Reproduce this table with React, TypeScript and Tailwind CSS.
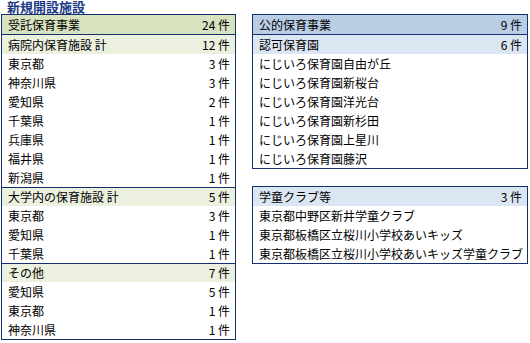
import React from "react";

const font = {
  fontFamily: '"Noto Sans CJK JP", "Noto Sans", sans-serif',
};

function Row({
  label,
  count,
  bg = "",
  h = "h-[19px]",
  line = "",
}: {
  label: string;
  count?: string;
  bg?: string;
  h?: string;
  line?: string;
}) {
  return (
    <div
      className={`flex items-center justify-between pl-[6px] pr-[5px] text-[12px] leading-none text-black ${h} ${bg} ${line}`}
    >
      <span className="whitespace-nowrap">{label}</span>
      {count !== undefined && (
        <span className="whitespace-nowrap">{count} 件</span>
      )}
    </div>
  );
}

export default function App() {
  const groupA = ["東京都", "神奈川県", "愛知県", "千葉県", "兵庫県", "福井県", "新潟県"];
  const groupACounts = ["3", "3", "2", "1", "1", "1", "1"];
  const groupB = ["東京都", "愛知県", "千葉県"];
  const groupBCounts = ["3", "1", "1"];
  const groupC = ["愛知県", "東京都", "神奈川県"];
  const groupCCounts = ["5", "1", "1"];
  const nursery = [
    "にじいろ保育園自由が丘",
    "にじいろ保育園新桜台",
    "にじいろ保育園洋光台",
    "にじいろ保育園新杉田",
    "にじいろ保育園上星川",
    "にじいろ保育園藤沢",
  ];
  const clubs = [
    "東京都中野区新井学童クラブ",
    "東京都板橋区立桜川小学校あいキッズ",
    "東京都板橋区立桜川小学校あいキッズ学童クラブ",
  ];
  return (
    <div className="w-[530px] h-[343px] overflow-hidden bg-white" style={font}>
      <div className="h-[14px] pl-[7px] text-[13px] font-bold leading-[14px] text-[#1b3a86]">
        新規開設施設
      </div>
      <div className="flex items-start">
        <div className="ml-[1px] w-[235px] border border-[#14306e]">
          <Row
            label="受託保育事業"
            count="24"
            bg="bg-[#d7e2bf]"
            h="h-[20px]"
            line="border-b border-[#14306e]"
          />
          <Row label="病院内保育施設 計" count="12" bg="bg-[#ebf0df]" />
          {groupA.map((l, i) => (
            <Row key={"a" + i} label={l} count={groupACounts[i]} />
          ))}
          <Row
            label="大学内の保育施設 計"
            count="5"
            bg="bg-[#ebf0df]"
            line="border-t border-[#14306e]"
          />
          {groupB.map((l, i) => (
            <Row key={"b" + i} label={l} count={groupBCounts[i]} />
          ))}
          <Row
            label="その他"
            count="7"
            bg="bg-[#ebf0df]"
            line="border-t border-[#14306e]"
          />
          {groupC.map((l, i) => (
            <Row key={"c" + i} label={l} count={groupCCounts[i]} />
          ))}
        </div>
        <div className="ml-[16px] flex w-[276px] flex-col gap-[17px]">
          <div className="border border-[#14306e]">
            <Row
              label="公的保育事業"
              count="9"
              bg="bg-[#b9cde5]"
              h="h-[20px]"
              line="border-b border-[#14306e]"
            />
            <Row label="認可保育園" count="6" bg="bg-[#dce6f2]" />
            {nursery.map((l, i) => (
              <Row key={"n" + i} label={l} />
            ))}
          </div>
          <div className="border border-[#14306e]">
            <Row label="学童クラブ等" count="3" bg="bg-[#dce6f2]" />
            {clubs.map((l, i) => (
              <Row key={"k" + i} label={l} />
            ))}
          </div>
        </div>
      </div>
    </div>
  );
}
